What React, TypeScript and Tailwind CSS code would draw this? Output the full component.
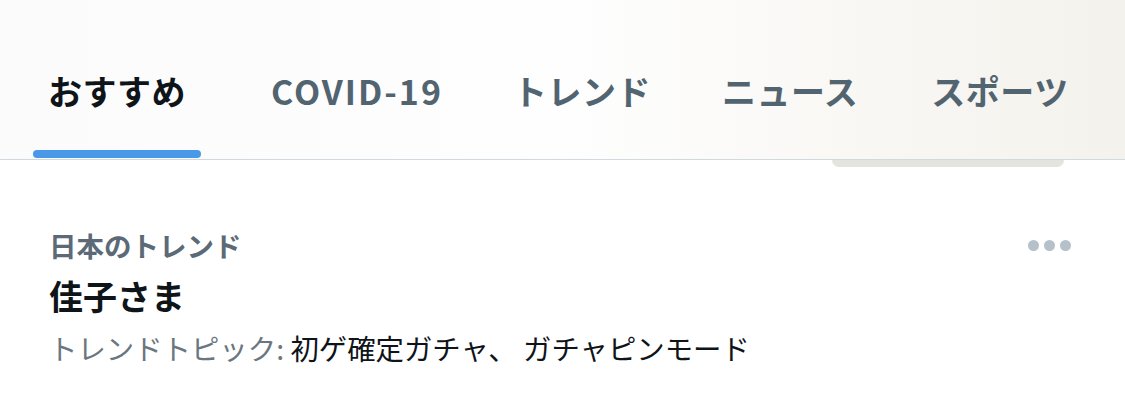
const tabs = ["おすすめ", "COVID-19", "トレンド", "ニュース", "スポーツ"];

const font = {
  fontFamily: '"Noto Sans CJK JP", "Noto Sans", "Liberation Sans", sans-serif',
};

export default function App() {
  return (
    <div className="w-[1125px] h-[413px] overflow-hidden bg-white" style={font}>
      <header className="relative h-[160px] border-b border-[#cfd9de] bg-gradient-to-r from-[#fbfbfb] via-[#fefefe] to-[#f4f2ec]">
        <nav className="flex h-full items-end overflow-hidden pl-[33px]">
          {tabs.map((tab, i) => (
            <div
              key={tab}
              className={
                "relative flex h-full shrink-0 flex-col items-center justify-end px-[15px] " +
                (i === 0 ? "mr-[55px]" : i === 1 ? "mr-[40px]" : i === 2 ? "mr-[41px]" : "mr-[43px]")
              }
            >
              <span
                className={
                  "whitespace-nowrap pb-[51px] text-[34px] font-bold leading-none " +
                  (i === 0 ? "text-[#0f1419]" : "text-[#536471]") +
                  (i === 1 ? " tracking-[2px]" : " tracking-[0.5px]")
                }
              >
                {tab}
              </span>
              {i === 0 ? <div className="absolute bottom-[1px] left-0 right-0 h-[8px] rounded-full bg-[#4a99e9]" /> : null}
            </div>
          ))}
        </nav>
        <div className="absolute left-[832px] top-[160px] h-[7px] w-[232px] rounded-b-[18px] bg-[#e4e4de]" />
      </header>

      <section className="relative px-[49px] pt-[72px]">
        <p className="text-[27.5px] font-bold leading-none text-[#5b6a76]">日本のトレンド</p>
        <p className="mt-[19px] text-[34px] font-bold leading-none text-[#0f1419]">佳子さま</p>
        <p className="mt-[21px] text-[28.4px] leading-none">
          <span className="text-[#6a7680]">トレンドトピック: </span>
          <span className="text-[#0f1419]">初ゲ確定ガチャ、 ガチャピンモード</span>
        </p>
        <div className="absolute right-[54px] top-[80px] flex gap-[5px]">
          <span className="h-[11px] w-[11px] rounded-full bg-[#b4c0ca]" />
          <span className="h-[11px] w-[11px] rounded-full bg-[#b4c0ca]" />
          <span className="h-[11px] w-[11px] rounded-full bg-[#b4c0ca]" />
        </div>
      </section>
    </div>
  );
}
